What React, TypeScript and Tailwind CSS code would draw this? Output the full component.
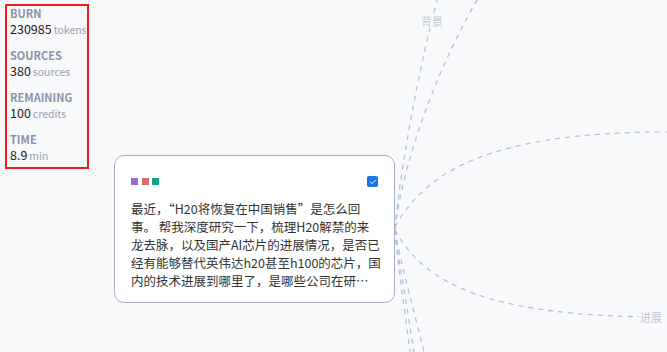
import { Check } from "lucide-react";

const stats = [
  { label: "BURN", value: "230985", unit: "tokens" },
  { label: "SOURCES", value: "380", unit: "sources" },
  { label: "REMAINING", value: "100", unit: "credits" },
  { label: "TIME", value: "8.9", unit: "min" },
];

// question text, broken the way the node shows it (clamped at 5 lines)
const questionLines = [
  "最近，“H20将恢复在中国销售”是怎么回",
  "事。 帮我深度研究一下，梳理H20解禁的来",
  "龙去脉，以及国产AI芯片的进展情况，是否已",
  "经有能够替代英伟达h20甚至h100的芯片，国",
  "内的技术进展到哪里了，是哪些公司在研…",
];

export default function App() {
  return (
    <div
      className="relative w-[667px] h-[352px] overflow-hidden bg-[#f8f9fb]"
      style={{ fontFamily: '"Noto Sans CJK SC", "Noto Sans", sans-serif' }}
    >
      {/* edges */}
      <svg className="absolute inset-0" width="667" height="352" fill="none">
        <g stroke="#b3bdd6" strokeWidth="1.2" strokeDasharray="5 5">
          <path d="M395 229 C400 170 420 60 440 -10" />
          <path d="M395 229 C403 160 440 60 482 -8" />
          <path d="M395 227 C425 172 490 132 667 132" />
          <path d="M395 230 C425 285 490 317 667 317" />
          <path d="M395 230 C398 270 405 310 411 360" />
          <path d="M395 230 C400 270 408 310 415 360" />
          <path d="M395 230 C402 270 414 310 426 360" />
        </g>
      </svg>

      {/* edge labels */}
      <div className="absolute left-[421px] top-[14px] bg-[#f8f9fb] text-[11px] leading-[14px] text-[#c2c8d8]">
        背景
      </div>
      <div className="absolute left-[639px] top-[310px] bg-[#f8f9fb] px-[1px] text-[11px] leading-[14px] text-[#c2c8d8]">
        进展
      </div>

      {/* stats overlay */}
      <div className="absolute left-[5px] top-[4px] w-[84px] h-[165px] border-2 border-[#ee1c1c] pl-[3px] flex flex-col gap-[10px]">
        {stats.map((s) => (
          <div key={s.label} className="flex flex-col whitespace-nowrap">
            <span className="text-[11px] leading-[14px] font-bold text-[#8a93a8]">{s.label}</span>
            <div className="flex items-baseline gap-[2px] h-[18px] leading-[18px]">
              <span className="text-[12.5px] text-[#222]">{s.value}</span>
              <span className="text-[10.5px] text-[#9aa1b0]">{s.unit}</span>
            </div>
          </div>
        ))}
      </div>

      {/* question node */}
      <div className="absolute left-[114px] top-[155px] w-[281px] rounded-[10px] border border-[#a6aec4] bg-white px-4 pt-[20px] pb-[12px]">
        <div className="flex items-center justify-between h-[11px]">
          <div className="flex gap-[3.5px]">
            <span className="w-[7px] h-[7px] bg-[#9a68da]" />
            <span className="w-[7px] h-[7px] bg-[#d86a6b]" />
            <span className="w-[7px] h-[7px] bg-[#15a08c]" />
          </div>
          <span className="w-[11px] h-[11px] rounded-[2px] bg-[#1a73e8] flex items-center justify-center">
            <Check className="w-[8px] h-[8px] text-white" strokeWidth={3} />
          </span>
        </div>
        <div className="mt-[13px] text-[12.5px] leading-[18px] text-[#333]">
          {questionLines.map((line, i) => (
            <p key={i} className="whitespace-nowrap">
              {line}
            </p>
          ))}
        </div>
      </div>
    </div>
  );
}
